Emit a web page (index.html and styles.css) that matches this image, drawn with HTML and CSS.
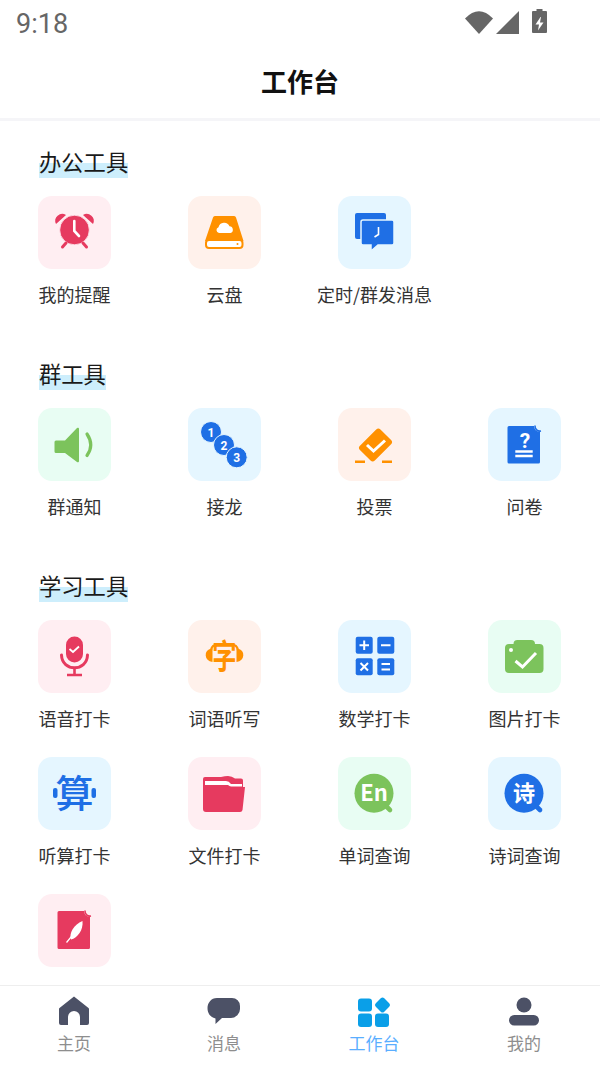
FILE: index.html
```html
<!DOCTYPE html>
<html lang="zh-CN">
<head>
    <meta charset="UTF-8">
    <meta name="viewport" content="width=device-width, initial-scale=1.0">
    <title>工作台</title>
    <link rel="stylesheet" href="styles.css">
</head>
<body>
    <div class="page">
        <div class="status-bar">
            <span class="time">9:18</span>
            <svg class="status-icons" width="83" height="25" viewBox="0 0 83 25">
                <path d="M14 25 L0 9.500 Q14 -5 28 9.500 Z" fill="#666"/>
                <path d="M31 25 L54 2 V25 Z" fill="#666"/>
                <path d="M71.500 0 h6 v2 h3.500 a1 1 0 0 1 1 1 v20 a1 1 0 0 1 -1 1 h-13 a1 1 0 0 1 -1 -1 v-20 a1 1 0 0 1 1 -1 h3.500 Z" fill="#666"/>
                <path d="M75.500 8 L70.500 15.500 h3.500 l-1 6 l5.500 -8 h-3.500 l1 -5.500 Z" fill="#fff"/>
            </svg>
        </div>
        <header class="title-bar">工作台</header>

        <main class="content">
            <section class="group">
                <h2 class="group-title"><span>办公工具</span></h2>
                <div class="tools">
                    <div class="tool">
                        <div class="tile pink">
                            <svg viewBox="0 0 73 73">
                                <path d="M18 28 a7 7 0 0 1 10 -9 Z M55 28 a7 7 0 0 0 -10 -9 Z" fill="#e63a5f"/>
                                <circle cx="36.500" cy="34" r="14.800" fill="#e63a5f" stroke="#ffeef2" stroke-width="0.800"/>
                                <path d="M24.500 51 L28 47 M48.500 51 L45 47" stroke="#e63a5f" stroke-width="3" stroke-linecap="round"/>
                                <path d="M36.300 25 V35 L41 40" stroke="#fff" stroke-width="2.600" fill="none" stroke-linecap="round"/>
                            </svg>
                        </div>
                        <div class="tool-name">我的提醒</div>
                    </div>
                    <div class="tool">
                        <div class="tile orange">
                            <svg viewBox="0 0 73 73">
                                <path d="M27 20 H46 a2 2 0 0 1 2 1.500 L55.500 45 H17 L25 21.500 a2 2 0 0 1 2 -1.500 Z" fill="#ff9100"/>
                                <rect x="18" y="44" width="36.500" height="8" rx="3" fill="#fff" stroke="#ff9100" stroke-width="2"/>
                                <circle cx="49.500" cy="48" r="1" fill="#ff9100"/>
                                <path d="M31 37 a3 3 0 0 1 -0.500 -5.800 a5.800 5.800 0 0 1 11 -1 a3.500 3.500 0 0 1 1 6.800 Z" fill="#fff"/>
                            </svg>
                        </div>
                        <div class="tool-name">云盘</div>
                    </div>
                    <div class="tool">
                        <div class="tile blue">
                            <svg viewBox="0 0 73 73">
                                <path d="M19 17 H46 a2 2 0 0 1 2 2 V43 H19 a2 2 0 0 1 -2 -2 V19 a2 2 0 0 1 2 -2 Z" fill="#1f6fe5"/>
                                <path d="M25 24 H54 a2 2 0 0 1 2 2 V47 a2 2 0 0 1 -2 2 H40 L33 55 V49 H25 a2 2 0 0 1 -2 -2 V26 a2 2 0 0 1 2 -2 Z" fill="#1f6fe5" stroke="#e5f6ff" stroke-width="1.500"/>
                                <path d="M40.500 31 V38.500 L36.500 41" stroke="#fff" stroke-width="1.600" fill="none"/>
                            </svg>
                        </div>
                        <div class="tool-name">定时/群发消息</div>
                    </div>
                </div>
            </section>

            <section class="group">
                <h2 class="group-title"><span>群工具</span></h2>
                <div class="tools">
                    <div class="tool">
                        <div class="tile green">
                            <svg viewBox="0 0 73 73">
                                <path d="M18 32.500 H27 L39 20 a1.200 1.200 0 0 1 2 1 V53 a1.200 1.200 0 0 1 -2 1 L27 45 H18 a1.500 1.500 0 0 1 -1.500 -1.500 V34 a1.500 1.500 0 0 1 1.500 -1.500 Z" fill="#7cc35c"/>
                                <path d="M49 26 Q56.500 37 49 47.500" stroke="#7cc35c" stroke-width="3.200" fill="none" stroke-linecap="round"/>
                            </svg>
                        </div>
                        <div class="tool-name">群通知</div>
                    </div>
                    <div class="tool">
                        <div class="tile blue">
                            <svg viewBox="0 0 73 73" class="num-icon">
                                <circle cx="23" cy="24" r="10.500" fill="#1f6fe5" stroke="#e5f6ff"/>
                                <text x="23" y="28.500" class="num">1</text>
                                <circle cx="36" cy="37" r="10.500" fill="#1f6fe5" stroke="#e5f6ff"/>
                                <text x="36" y="41.500" class="num">2</text>
                                <circle cx="48.700" cy="49.300" r="10.500" fill="#1f6fe5" stroke="#e5f6ff"/>
                                <text x="48.700" y="53.800" class="num">3</text>
                            </svg>
                        </div>
                        <div class="tool-name">接龙</div>
                    </div>
                    <div class="tool">
                        <div class="tile orange">
                            <svg viewBox="0 0 73 73">
                                <rect x="23" y="26.500" width="29" height="21" rx="3" transform="rotate(-45 37.500 37)" fill="#ff9100"/>
                                <path d="M29 37 L35.500 43 L47 32.500" stroke="#fff" stroke-width="3" fill="none"/>
                                <path d="M17 53.700 H27 M44 53.700 H54" stroke="#ff9100" stroke-width="2.400"/>
                            </svg>
                        </div>
                        <div class="tool-name">投票</div>
                    </div>
                    <div class="tool">
                        <div class="tile blue">
                            <svg viewBox="0 0 73 73">
                                <path d="M21 18 H46 a6 6 0 0 0 6 6 V54 a1.500 1.500 0 0 1 -1.500 1.500 H21 a1.500 1.500 0 0 1 -1.500 -1.500 V19.500 a1.500 1.500 0 0 1 1.500 -1.500 Z" fill="#1f6fe5"/>
                                <path d="M47 17.500 a5 5 0 0 0 6 5.500" stroke="#1f6fe5" stroke-width="1.600" fill="none"/>
                                <text x="37" y="39.500" class="doc-mark">?</text>
                                <path d="M27.300 43.500 H44.700 M27.300 48 H44.700" stroke="#fff" stroke-width="2.400"/>
                            </svg>
                        </div>
                        <div class="tool-name">问卷</div>
                    </div>
                </div>
            </section>

            <section class="group">
                <h2 class="group-title"><span>学习工具</span></h2>
                <div class="tools">
                    <div class="tool">
                        <div class="tile pink">
                            <svg viewBox="0 0 73 73">
                                <rect x="28" y="16.500" width="17" height="26" rx="8.500" fill="#e63a5f"/>
                                <path d="M31.500 29 L35 32 L41 26.500" stroke="#fff" stroke-width="1.800" fill="none"/>
                                <path d="M23.500 35 C24 52 49 52 49.500 35" stroke="#e63a5f" stroke-width="3" fill="none" stroke-linecap="round"/>
                                <path d="M36.500 47 V55 M29 55 H44" stroke="#e63a5f" stroke-width="2.600"/>
                            </svg>
                        </div>
                        <div class="tool-name">语音打卡</div>
                    </div>
                    <div class="tool">
                        <div class="tile orange">
                            <svg viewBox="0 0 73 73">
                                <path d="M24.500 42 a8.500 7 0 0 1 -1 -13.500 L24.500 28 Z M48.500 42 a8.500 7 0 0 0 1 -13.500 L48.500 28 Z" fill="#ff9100"/>
                                <path d="M23 30 Q24 24.500 30 24.500 M50 30 Q49 24.500 43 24.500" stroke="#ff9100" stroke-width="2.200" fill="none"/>
                                <text class="glyph fill-orange" transform="translate(36.500 49) scale(.9 1.250)">字</text>
                            </svg>
                        </div>
                        <div class="tool-name">词语听写</div>
                    </div>
                    <div class="tool">
                        <div class="tile blue">
                            <svg viewBox="0 0 73 73">
                                <rect x="17.700" y="16.700" width="17" height="17" rx="2" fill="#1f6fe5"/>
                                <rect x="39.300" y="16.700" width="17" height="17" rx="2" fill="#1f6fe5"/>
                                <rect x="17.700" y="38.300" width="17" height="17" rx="2" fill="#1f6fe5"/>
                                <rect x="39.300" y="38.300" width="17" height="17" rx="2" fill="#1f6fe5"/>
                                <path d="M21.500 25.200 H31 M26.200 20.500 V30 M43 25.200 H52.500 M22.500 43 L30 50.500 M30 43 L22.500 50.500 M43.500 44 H52 M43.500 49.500 H52" stroke="#fff" stroke-width="2"/>
                            </svg>
                        </div>
                        <div class="tool-name">数学打卡</div>
                    </div>
                    <div class="tool">
                        <div class="tile green">
                            <svg viewBox="0 0 73 73">
                                <path d="M25.500 24 a4 4 0 0 1 4 -4 H43 a4 4 0 0 1 4 4 H51.500 a4 4 0 0 1 4 4 V49 a4 4 0 0 1 -4 4 H21 a4 4 0 0 1 -4 -4 V28 a4 4 0 0 1 4 -4 Z" fill="#7cc35c"/>
                                <circle cx="23" cy="30" r="2" fill="#fff"/>
                                <path d="M27.500 41 L34.500 47 L48 33" stroke="#fff" stroke-width="3" fill="none"/>
                            </svg>
                        </div>
                        <div class="tool-name">图片打卡</div>
                    </div>
                    <div class="tool">
                        <div class="tile blue">
                            <svg viewBox="0 0 73 73">
                                <rect x="15" y="31" width="4.500" height="10" rx="2" fill="#1f6fe5"/>
                                <rect x="53.500" y="31" width="4.500" height="10" rx="2" fill="#1f6fe5"/>
                                <text x="36.500" y="50" class="glyph-wide fill-blue">算</text>
                            </svg>
                        </div>
                        <div class="tool-name">听算打卡</div>
                    </div>
                    <div class="tool">
                        <div class="tile pink">
                            <svg viewBox="0 0 73 73">
                                <path d="M17 20 H33 Q37 19 40 19 Q44 19 47 21.500 H53 a2 2 0 0 1 2 2 V30 H15 V22 a2 2 0 0 1 2 -2 Z" fill="#e63a5f"/>
                                <path d="M17 24 H38 Q41 24 43 27 H54 V29.500 H17 Z" fill="#fff"/>
                                <path d="M17 28 H40 L43 30 H57 L54.500 53 a2.500 2.500 0 0 1 -2.500 2 H18 a3 3 0 0 1 -3 -3 V30 a2 2 0 0 1 2 -2 Z" fill="#e63a5f"/>
                            </svg>
                        </div>
                        <div class="tool-name">文件打卡</div>
                    </div>
                    <div class="tool">
                        <div class="tile green">
                            <svg viewBox="0 0 73 73">
                                <circle cx="36" cy="36.300" r="19.500" fill="#7cc35c"/>
                                <path d="M49 50 L52 53" stroke="#7cc35c" stroke-width="4.600" stroke-linecap="round"/>
                                <text x="36" y="44" class="badge-text">En</text>
                            </svg>
                        </div>
                        <div class="tool-name">单词查询</div>
                    </div>
                    <div class="tool">
                        <div class="tile blue">
                            <svg viewBox="0 0 73 73">
                                <circle cx="36" cy="36.300" r="19.500" fill="#1f6fe5"/>
                                <path d="M49 50 L52 53" stroke="#1f6fe5" stroke-width="4.600" stroke-linecap="round"/>
                                <text x="36" y="44" class="badge-text">诗</text>
                            </svg>
                        </div>
                        <div class="tool-name">诗词查询</div>
                    </div>
                    <div class="tool">
                        <div class="tile pink">
                            <svg viewBox="0 0 73 73">
                                <path d="M21 17 H46 a6 6 0 0 0 6 6 V53.500 a1.500 1.500 0 0 1 -1.500 1.500 H21 a1.500 1.500 0 0 1 -1.500 -1.500 V18.500 a1.500 1.500 0 0 1 1.500 -1.500 Z" fill="#e63a5f"/>
                                <path d="M47 16.500 a5 5 0 0 0 6 5.500" stroke="#e63a5f" stroke-width="1.600" fill="none"/>
                                <path d="M44.500 27 C45.500 36 39.500 44 33 45.500 C30.500 40 36 30 44.500 27 Z" fill="#fff"/>
                                <path d="M35.500 40 L28.500 48.500" stroke="#fff" stroke-width="1.200"/>
                            </svg>
                        </div>
                    </div>
                </div>
            </section>
        </main>

        <nav class="tab-bar">
            <div class="tab">
                <svg width="36" height="32" viewBox="0 0 36 32">
                    <path d="M18 0.500 L32.500 12 a1.500 1.500 0 0 1 0.500 1.200 V27 a2 2 0 0 1 -2 2 H24 V21 a6 6 0 0 0 -12 0 V29 H5 a2 2 0 0 1 -2 -2 V13.200 a1.500 1.500 0 0 1 0.500 -1.200 Z" fill="#4c5166"/>
                </svg>
                <span class="tab-name">主页</span>
            </div>
            <div class="tab">
                <svg width="36" height="32" viewBox="0 0 36 32">
                    <path d="M11 2 H26 a8 8 0 0 1 8 8 V13 a9 9 0 0 1 -9 9 H16 L9.500 28 V22.500 C5 21.500 1.500 18 1.500 12 C1.500 7 5 2 11 2 Z" fill="#4c5166"/>
                </svg>
                <span class="tab-name">消息</span>
            </div>
            <div class="tab active">
                <svg width="36" height="32" viewBox="0 0 36 32">
                    <rect x="2" y="2.500" width="14" height="13" rx="3" fill="#0a9fe8"/>
                    <rect x="20.500" y="3" width="12" height="12" rx="2.500" transform="rotate(45 26.500 9)" fill="#0a9fe8"/>
                    <rect x="2" y="17.500" width="14" height="13.500" rx="3" fill="#0a9fe8"/>
                    <rect x="19" y="17.500" width="14" height="13.500" rx="3" fill="#0a9fe8"/>
                </svg>
                <span class="tab-name">工作台</span>
            </div>
            <div class="tab">
                <svg width="36" height="32" viewBox="0 0 36 32">
                    <circle cx="18" cy="9" r="7.500" fill="#4c5166"/>
                    <rect x="3" y="19" width="30" height="10.500" rx="5.200" fill="#4c5166"/>
                </svg>
                <span class="tab-name">我的</span>
            </div>
        </nav>
    </div>
</body>
</html>
```

FILE: styles.css
```css
* {
    box-sizing: border-box;
}
body {
    font-family: "Noto Sans CJK SC", "Noto Sans", sans-serif;
    margin: 0;
    padding: 0;
    background-color: #fff;
}
.page {
    display: flex;
    flex-direction: column;
    height: 1066px;
    overflow: hidden;
}
.status-bar {
    display: flex;
    justify-content: space-between;
    align-items: flex-start;
    height: 50px;
    padding: 9px 52px 0 16px;
}
.time {
    font-family: Roboto, sans-serif;
    font-size: 27px;
    line-height: 31px;
    color: #666;
}
.status-icons {
    display: block;
}
.title-bar {
    height: 71px;
    padding-top: 14px;
    text-align: center;
    font-size: 26px;
    line-height: 34px;
    font-weight: 700;
    color: #111;
    border-bottom: 3px solid #f5f5f8;
}
.content {
    flex: 1;
    min-height: 0;
    overflow: hidden;
    padding-top: 26px;
}
.group {
    margin-bottom: 52px;
}
.group-title {
    margin: 0 0 18px 39px;
    font-size: 22.300px;
    line-height: 28px;
    font-weight: 400;
    color: #1a1a1a;
}
.group-title span {
    display: inline-block;
    padding-bottom: 3px;
    background: linear-gradient(to bottom, transparent 16px, #cdeefc 16px);
}
.tools {
    display: grid;
    grid-template-columns: repeat(4, 150px);
    row-gap: 26px;
    margin-left: -1px;
}
.tool {
    display: flex;
    flex-direction: column;
    align-items: center;
}
.tile {
    width: 73px;
    height: 73px;
    border-radius: 14px;
}
.tile svg {
    display: block;
    width: 73px;
    height: 73px;
}
.pink {
    background-color: #ffeef2;
}
.orange {
    background-color: #fff1eb;
}
.blue {
    background-color: #e5f6ff;
}
.green {
    background-color: #e8fdf3;
}
.tool-name {
    margin-top: 12px;
    padding-left: 1px;
    font-size: 18px;
    line-height: 26px;
    color: #333;
    white-space: nowrap;
}
.num {
    font-family: Roboto, sans-serif;
    font-size: 12px;
    font-weight: 700;
    fill: #fff;
    text-anchor: middle;
}
.doc-mark {
    font-family: Roboto, sans-serif;
    font-size: 21px;
    font-weight: 700;
    fill: #fff;
    text-anchor: middle;
}
.glyph {
    font-size: 27px;
    font-weight: 700;
    text-anchor: middle;
}
.glyph-wide {
    font-size: 38px;
    font-weight: 500;
    text-anchor: middle;
}
.fill-orange {
    fill: #ff9100;
}
.fill-blue {
    fill: #1f6fe5;
}
.badge-text {
    font-size: 22px;
    font-weight: 700;
    fill: #fff;
    text-anchor: middle;
}
.tab-bar {
    display: grid;
    grid-template-columns: repeat(4, 1fr);
    height: 81px;
    padding-top: 10px;
    background-color: #fff;
    border-top: 1px solid #eeeeee;
}
.tab {
    display: flex;
    flex-direction: column;
    align-items: center;
    padding-right: 2px;
}
.tab svg {
    display: block;
}
.tab-name {
    font-size: 17px;
    line-height: 26px;
    margin-top: 2px;
    color: #8e8e8e;
}
.tab.active .tab-name {
    color: #5aaeff;
}
```
